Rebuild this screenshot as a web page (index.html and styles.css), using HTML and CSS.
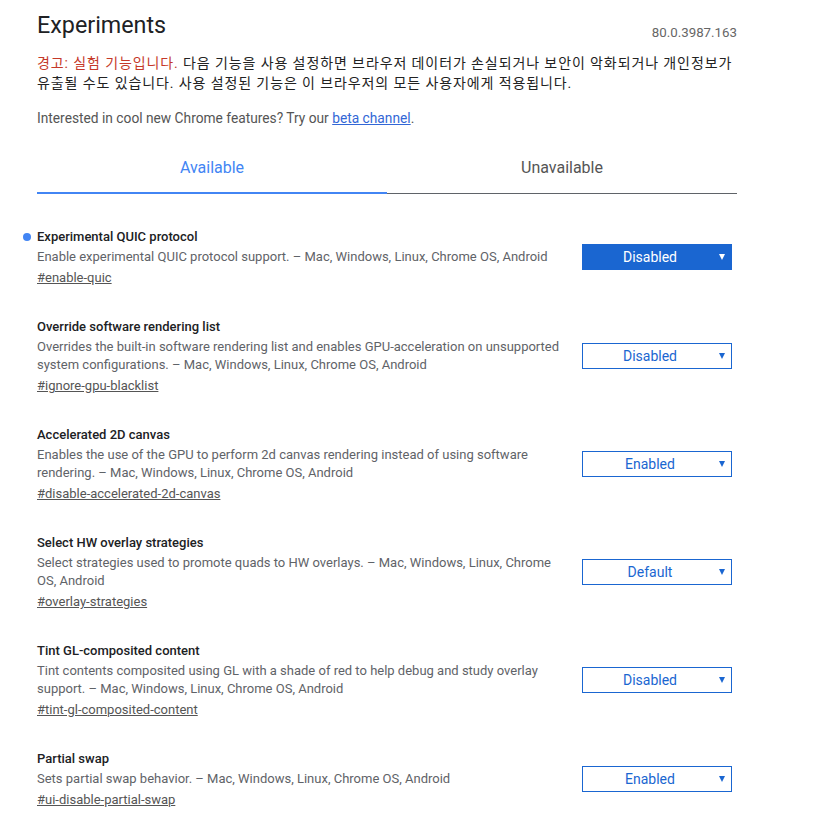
FILE: index.html
```html
<!DOCTYPE html>
<html lang="ko">
<head>
<meta charset="utf-8">
<link rel="stylesheet" href="styles.css">
</head>
<body>
<div class="page">
  <header class="head">
    <h1 class="title">Experiments</h1>
    <span class="version">80.0.3987.163</span>
  </header>
  <p class="warning"><span class="warn-red">경고: 실험 기능입니다.</span> 다음 기능을 사용 설정하면 브라우저 데이터가 손실되거나 보안이 악화되거나 개인정보가 유출될 수도 있습니다. 사용 설정된 기능은 이 브라우저의 모든 사용자에게 적용됩니다.</p>
  <p class="promo">Interested in cool new Chrome features? Try our <a href="#" class="promo-link">beta channel</a>.</p>
  <nav class="tabs">
    <div class="tab tab-active">Available</div>
    <div class="tab">Unavailable</div>
  </nav>
  <div class="list">
    <div class="exp">
      <div class="exp-text">
        <div class="exp-name"><span class="dot"></span>Experimental QUIC protocol</div>
        <p class="exp-desc">Enable experimental QUIC protocol support. – Mac, Windows, Linux, Chrome OS, Android</p>
        <a href="#" class="exp-link">#enable-quic</a>
      </div>
      <div class="select select-filled">Disabled<span class="arrow"></span></div>
    </div>
    <div class="exp">
      <div class="exp-text">
        <div class="exp-name">Override software rendering list</div>
        <p class="exp-desc">Overrides the built-in software rendering list and enables GPU-acceleration on unsupported system configurations. – Mac, Windows, Linux, Chrome OS, Android</p>
        <a href="#" class="exp-link">#ignore-gpu-blacklist</a>
      </div>
      <div class="select">Disabled<span class="arrow"></span></div>
    </div>
    <div class="exp">
      <div class="exp-text">
        <div class="exp-name">Accelerated 2D canvas</div>
        <p class="exp-desc">Enables the use of the GPU to perform 2d canvas rendering instead of using software rendering. – Mac, Windows, Linux, Chrome OS, Android</p>
        <a href="#" class="exp-link">#disable-accelerated-2d-canvas</a>
      </div>
      <div class="select">Enabled<span class="arrow"></span></div>
    </div>
    <div class="exp">
      <div class="exp-text">
        <div class="exp-name">Select HW overlay strategies</div>
        <p class="exp-desc">Select strategies used to promote quads to HW overlays. – Mac, Windows, Linux, Chrome OS, Android</p>
        <a href="#" class="exp-link">#overlay-strategies</a>
      </div>
      <div class="select">Default<span class="arrow"></span></div>
    </div>
    <div class="exp">
      <div class="exp-text">
        <div class="exp-name">Tint GL-composited content</div>
        <p class="exp-desc">Tint contents composited using GL with a shade of red to help debug and study overlay support. – Mac, Windows, Linux, Chrome OS, Android</p>
        <a href="#" class="exp-link">#tint-gl-composited-content</a>
      </div>
      <div class="select">Disabled<span class="arrow"></span></div>
    </div>
    <div class="exp">
      <div class="exp-text">
        <div class="exp-name">Partial swap</div>
        <p class="exp-desc">Sets partial swap behavior. – Mac, Windows, Linux, Chrome OS, Android</p>
        <a href="#" class="exp-link">#ui-disable-partial-swap</a>
      </div>
      <div class="select">Enabled<span class="arrow"></span></div>
    </div>
  </div>
</div>
</body>
</html>
```

FILE: styles.css
```css
* { box-sizing: border-box; }
html, body { margin: 0; padding: 0; background: #fff; }
body {
  font-family: Roboto, "Noto Sans CJK KR", "Liberation Sans", sans-serif;
  color: #333;
}
.page {
  width: 700px;
  margin-left: 37px;
  padding-top: 8px;
}
.head {
  display: flex;
  justify-content: space-between;
  align-items: flex-end;
  height: 34px;
}
.title {
  margin: 0;
  font-size: 23.3px;
  font-weight: 400;
  color: #202124;
  line-height: 34px;
}
.version {
  font-size: 13.3px;
  color: #666;
  line-height: 16px;
  margin-bottom: 1px;
}
.warning {
  margin: 11px 0 0 0;
  font-size: 14px;
  line-height: 20px;
  letter-spacing: 0.9px;
  color: #222;
}
.warn-red { color: #c53929; }
.promo {
  margin: 15px 0 0 0;
  font-size: 13.75px;
  line-height: 20px;
  color: #555;
}
.promo-link { color: #3367d6; }
.tabs {
  display: flex;
  margin-top: 20px;
  border-bottom: 1px solid #5f6368;
}
.tab {
  flex: 1;
  text-align: center;
  font-size: 16px;
  color: #555;
  padding: 10px 0 14px;
  line-height: 20px;
}
.tab-active {
  color: #4285f4;
  border-bottom: 2px solid #4285f4;
  margin-bottom: -1px;
}
.list { margin-top: 33px; }
.exp {
  display: flex;
  align-items: center;
  justify-content: space-between;
  margin-bottom: 29px;
}
.exp-text { width: 530px; }
.exp-name {
  position: relative;
  font-size: 13px;
  font-weight: 500;
  color: #202124;
  line-height: 20px;
}
.dot {
  position: absolute;
  left: -14px;
  top: 6px;
  width: 8px;
  height: 8px;
  border-radius: 50%;
  background: #4285f4;
}
.exp-desc {
  margin: 1px 0 0 0;
  font-size: 13px;
  line-height: 18px;
  color: #5f6368;
}
.exp-link {
  display: block;
  margin-top: 2px;
  font-size: 13px;
  line-height: 20px;
  color: #555;
  text-decoration: underline;
}
.select {
  position: relative;
  width: 150px;
  height: 26px;
  margin-right: 5px;
  margin-top: -2px;
  padding-right: 14px;
  border: 1px solid #1a66d1;
  color: #1a66d1;
  font-size: 14px;
  line-height: 24px;
  text-align: center;
}
.select-filled {
  background: #1a66d1;
  color: #fff;
}
.arrow {
  position: absolute;
  right: 6px;
  top: 9px;
  width: 0;
  height: 0;
  border-left: 3.5px solid transparent;
  border-right: 3.5px solid transparent;
  border-top: 6px solid #1a66d1;
}
.select-filled .arrow { border-top-color: #fff; }
```
